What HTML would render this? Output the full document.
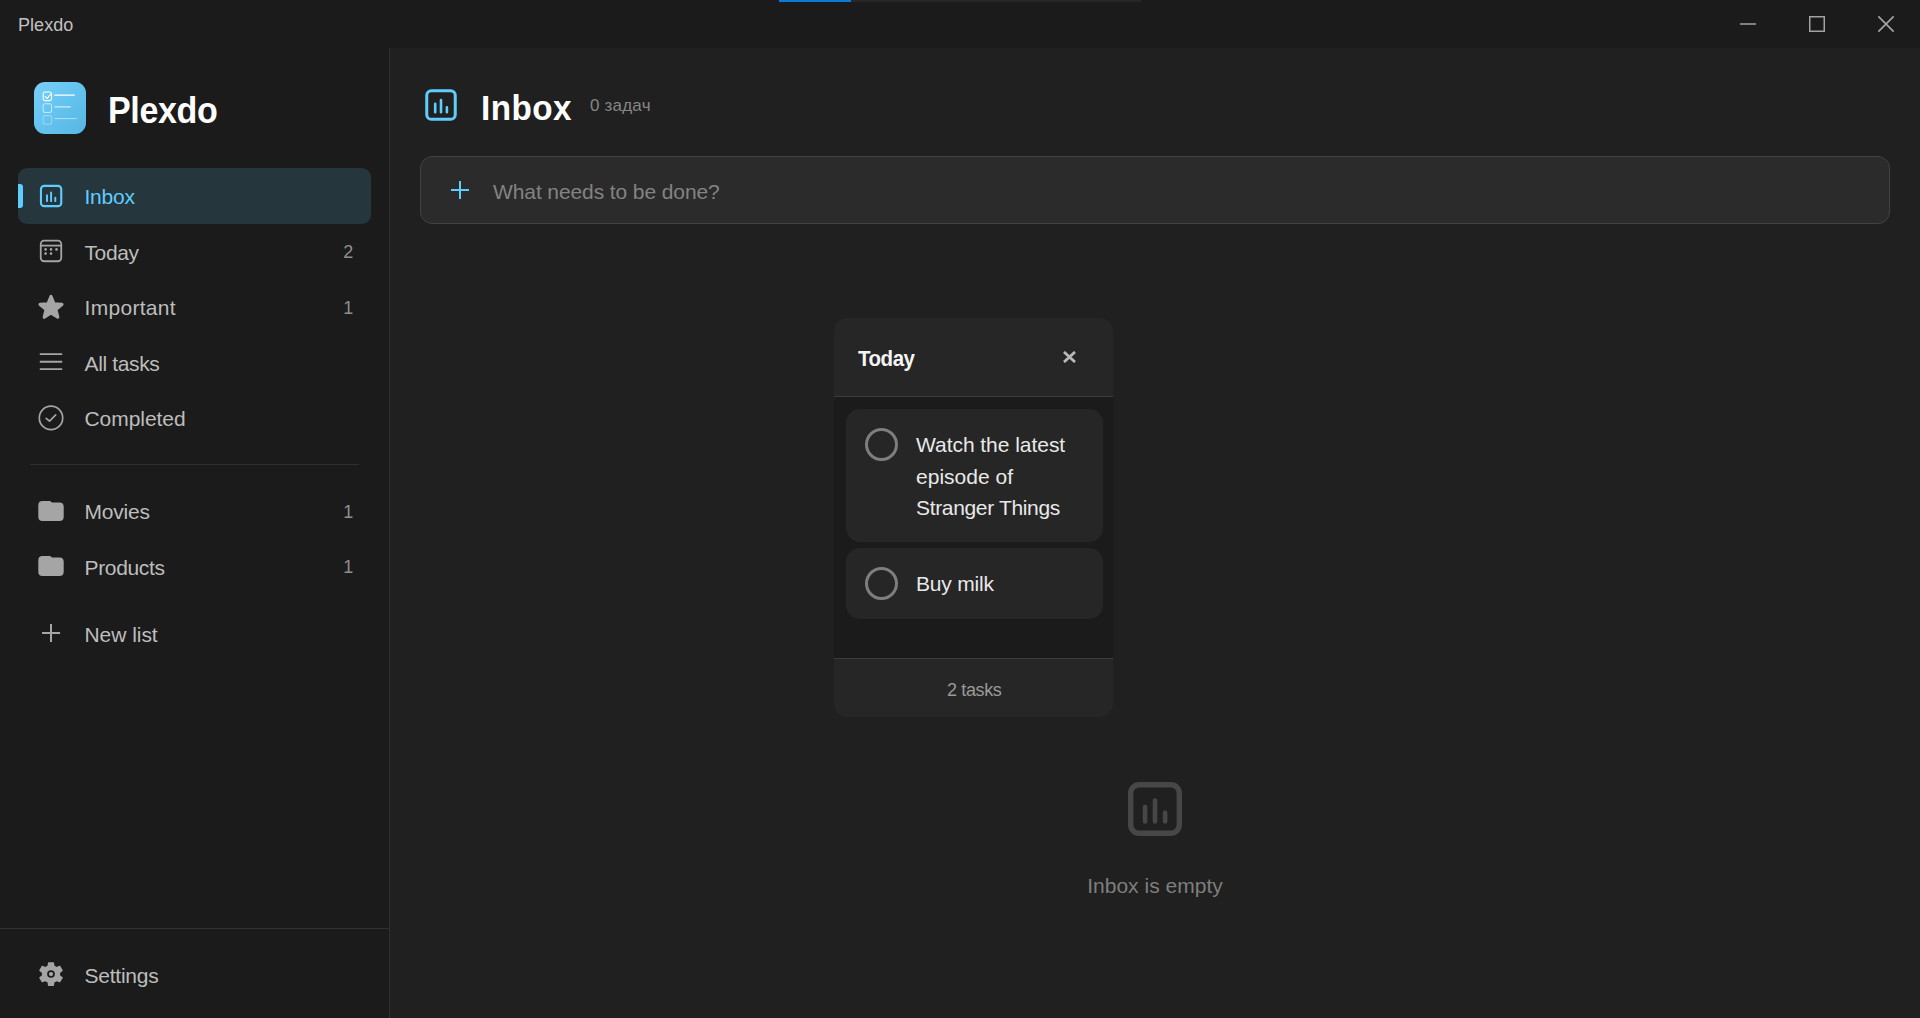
<!DOCTYPE html>
<html lang="en">
<head>
<meta charset="utf-8">
<title>Plexdo</title>
<style>
*{box-sizing:border-box;margin:0;padding:0}
html,body{width:1920px;height:1018px;overflow:hidden;background:#1b1b1b}
body{font-family:"Liberation Sans","DejaVu Sans",sans-serif;color:#c4c4c4;position:relative}
.abs{position:absolute}
svg{display:block}
#titlebar{left:0;top:0;width:1920px;height:48px;background:#1b1b1b}
#titlebar .t{left:18px;top:14px;font-size:18px;line-height:22px;color:#c2c2c2;letter-spacing:0.05px}
#prog{left:779px;top:0;width:362px;height:2px;background:#272727}
#prog i{display:block;width:72px;height:2px;background:#0a7ad6}
#sidebar{left:0;top:48px;width:390px;height:970px;background:#1b1b1b;border-right:1px solid #303030}
#logo{left:33.65px;top:81.65px;width:52.65px;height:52.65px;border-radius:11px;background:linear-gradient(135deg,#78d0fa 0%,#66c4f0 45%,#58b6e4 100%)}
#brand{left:108.1px;top:89px;font-size:36.2px;line-height:44px;font-weight:700;color:#fff;letter-spacing:-0.36px;transform:scaleX(.94);transform-origin:0 0;white-space:nowrap}
#active{left:18px;top:168px;width:353px;height:56px;border-radius:9px;background:#25363d}
#active i{position:absolute;left:0;top:16px;width:5px;height:24px;background:#60cdff;border-radius:0 3px 3px 0}
.lb{left:84.5px;font-size:21px;line-height:26px;color:#bdbdbd;white-space:nowrap}
.lb.on{color:#60cdff}
.ct{left:300px;width:53.3px;font-size:18px;line-height:22px;color:#8f8f8f;text-align:right}
#div1{left:30px;top:464px;width:329px;height:1px;background:#2f2f2f}
#div2{left:0;top:928px;width:389px;height:1px;background:#313131}
#main{left:390px;top:48px;width:1530px;height:970px;background:#202020}
#h-title{left:481px;top:86.3px;font-size:35.4px;line-height:44px;font-weight:700;color:#fff;letter-spacing:0.5px;transform:scaleX(.94);transform-origin:0 0;white-space:nowrap}
#h-sub{left:590px;top:95px;font-size:17px;line-height:22px;color:#868686;letter-spacing:0.2px}
#input{left:420px;top:156px;width:1470px;height:68px;border-radius:12px;background:#2b2b2b;border:1px solid #424242}
#ph{left:493px;top:179px;font-size:21px;line-height:26px;color:#838383;letter-spacing:-0.1px;white-space:nowrap}
#pop{left:834px;top:318px;width:279px;height:399px;border-radius:12.5px;background:#1b1b1b;overflow:hidden}
#pop .hd{left:0;top:0;width:279px;height:79px;background:#262626;border-bottom:1px solid #3d3d3d}
#pop .hd b{left:24px;top:26.5px;font-size:21.6px;line-height:28px;color:#f4f4f4;font-weight:700;letter-spacing:-0.5px;transform:scaleX(.95);transform-origin:0 0;white-space:nowrap}
#pop .ft{left:0;top:340px;width:279px;height:59px;background:#262626;border-top:1px solid #3d3d3d;text-align:center;font-size:18px;line-height:22px;padding-top:20px;padding-left:1.5px;color:#9a9a9a;letter-spacing:-0.36px}
.card{left:12px;width:257px;background:#262626;border-radius:14px}
.card .circ{left:19px;top:19px;width:33px;height:33px;border-radius:50%;border:3px solid #7e7e7e}
.card .tx{left:70px;top:20px;font-size:21px;line-height:31.7px;color:#e9e9e9;white-space:nowrap}
#empty-tx{left:955px;top:873px;width:400px;text-align:center;font-size:21px;line-height:26px;color:#7e7e7e;letter-spacing:0.02px}
</style>
</head>
<body>
<div id="titlebar" class="abs">
  <div class="t abs">Plexdo</div>
  <div id="prog" class="abs"><i></i></div>
  <svg class="abs" style="left:1740px;top:16px" width="16" height="16" viewBox="0 0 16 16"><path d="M0 8h16" stroke="#a2a2a2" stroke-width="1.5" fill="none"/></svg>
  <svg class="abs" style="left:1809px;top:16px" width="16" height="16" viewBox="0 0 16 16"><rect x=".75" y=".75" width="14.5" height="14.5" stroke="#a2a2a2" stroke-width="1.5" fill="none"/></svg>
  <svg class="abs" style="left:1878px;top:16px" width="16" height="16" viewBox="0 0 16 16"><path d="M.3.3l15.4 15.4M15.7.3L.3 15.7" stroke="#a2a2a2" stroke-width="1.7" fill="none"/></svg>
</div>
<div id="sidebar" class="abs"></div>
<div id="main" class="abs"></div>

<div id="logo" class="abs"></div>
<svg class="abs" style="left:34px;top:81px" width="53" height="54" viewBox="0.16 0 53 54" fill="none" stroke="#fff" stroke-linecap="round" stroke-linejoin="round">
    <rect x="9.3" y="11" width="8.4" height="8.6" rx="2" stroke-width="1.05"/>
    <path d="M11.3 15.6l2 2 3.6-4.4" stroke-width="1.15"/>
    <path d="M21 14.1h19.6" stroke-width="1.35"/>
    <rect x="9.3" y="22.8" width="8.4" height="8.6" rx="2" stroke-width="1.05" opacity=".6"/>
    <path d="M21 25.8h15.6" stroke-width="1.2" opacity=".7"/>
    <rect x="9.3" y="34.6" width="8.4" height="8.6" rx="2" stroke-width="1.05" opacity=".35"/>
    <path d="M21 37.6h21.6" stroke-width="1.0" opacity=".5"/>
  </svg>
<div id="brand" class="abs">Plexdo</div>

<div id="active" class="abs"><i></i></div>
<svg class="abs" style="left:0;top:0" width="390" height="1018" viewBox="0 0 390 1018"><rect x="40.95" y="185.85" width="20.30" height="20.30" rx="3.27" fill="none" stroke="#60cdff" stroke-width="2.1"/><path d="M46.98 195.17V201.17M51.10 192.47V201.17M55.30 197.59V201.17" fill="none" stroke="#60cdff" stroke-width="1.90" stroke-linecap="round"/>
<g fill="none" stroke="#a5a5a5" stroke-width="1.8"><rect x="40.75" y="240.55" width="20.5" height="20.7" rx="3.4"/><path d="M40.7 245.6H61.3"/></g><g fill="#a5a5a5"><circle cx="45.6" cy="249.4" r="1.3"/><circle cx="51" cy="249.4" r="1.3"/><circle cx="56.5" cy="249.4" r="1.3"/><circle cx="45.6" cy="253.6" r="1.3"/><circle cx="51" cy="253.6" r="1.3"/></g>
<polygon points="51.00,296.50 53.94,303.90 61.89,304.41 55.76,309.50 57.73,317.21 51.00,312.95 44.27,317.21 46.24,309.50 40.11,304.41 48.06,303.90" fill="#a5a5a5" stroke="#a5a5a5" stroke-width="3.3" stroke-linejoin="round"/>
<path d="M39.8 354.1H62.2M39.8 361.7H62.2M39.8 369.1H62.2" stroke="#a5a5a5" stroke-width="1.9" fill="none"/>
<g fill="none" stroke="#a5a5a5" stroke-width="1.7" stroke-linecap="round" stroke-linejoin="round"><circle cx="51" cy="417.9" r="11.7"/><path d="M46.2 418.4L49.5 421.2L55.7 414.9"/></g>
<path transform="translate(37 497.3)" d="M1.3 8Q1.3 3.7 5.6 3.7H12.6Q13.4 3.6 13.9 4.2L14.9 5.1H22.4Q26.7 5.1 26.7 9.4V19.4Q26.7 23.7 22.4 23.7H5.6Q1.3 23.7 1.3 19.4Z" fill="#a5a5a5"/>
<path transform="translate(37 552.3)" d="M1.3 8Q1.3 3.7 5.6 3.7H12.6Q13.4 3.6 13.9 4.2L14.9 5.1H22.4Q26.7 5.1 26.7 9.4V19.4Q26.7 23.7 22.4 23.7H5.6Q1.3 23.7 1.3 19.4Z" fill="#a5a5a5"/>
<path d="M51 624V641.9M42 633H60.1" stroke="#a5a5a5" stroke-width="2" fill="none"/>
<g transform="translate(35.84 959.25) scale(1.2632 1.2371)" fill="#a5a5a5" fill-rule="evenodd"><path d="M19.14,12.94c0.04-0.3,0.06-0.61,0.06-0.94c0-0.32-0.02-0.64-0.07-0.94l2.03-1.58c0.18-0.14,0.23-0.41,0.12-0.61 l-1.92-3.32c-0.12-0.22-0.37-0.29-0.59-0.22l-2.39,0.96c-0.5-0.38-1.03-0.7-1.62-0.94L14.4,2.81c-0.04-0.24-0.24-0.41-0.48-0.41 h-3.84c-0.24,0-0.43,0.17-0.47,0.41L9.25,5.35C8.66,5.59,8.12,5.92,7.63,6.29L5.24,5.33c-0.22-0.08-0.47,0-0.59,0.22L2.74,8.87 C2.62,9.08,2.66,9.34,2.86,9.48l2.03,1.58C4.84,11.36,4.8,11.69,4.8,12s0.02,0.64,0.07,0.94l-2.03,1.58 c-0.18,0.14-0.23,0.41-0.12,0.61l1.92,3.32c0.12,0.22,0.37,0.29,0.59,0.22l2.39-0.96c0.5,0.38,1.03,0.7,1.62,0.94l0.36,2.54 c0.05,0.24,0.24,0.41,0.48,0.41h3.84c0.24,0,0.44-0.17,0.47-0.41l0.36-2.54c0.59-0.24,1.13-0.56,1.62-0.94l2.39,0.96 c0.22,0.08,0.47,0,0.59-0.22l1.92-3.32c0.12-0.22,0.07-0.47-0.12-0.61L19.14,12.94z M12,15.05a3.05,3.05,0,1,0,0,-6.1a3.05,3.05,0,1,0,0,6.1z"/><circle cx="12" cy="12" r="1.7"/></g></svg>
<div class="lb abs on" style="top:184.0px;letter-spacing:-0.23px">Inbox</div>
<div class="lb abs" style="top:239.5px;letter-spacing:-0.4px">Today</div><div class="ct abs" style="top:241.0px">2</div>
<div class="lb abs" style="top:295.0px;letter-spacing:0.3px">Important</div><div class="ct abs" style="top:296.5px">1</div>
<div class="lb abs" style="top:350.5px;letter-spacing:-0.36px">All tasks</div>
<div class="lb abs" style="top:406.0px;letter-spacing:-0.06px">Completed</div>
<div class="lb abs" style="top:499.3px;letter-spacing:-0.21px">Movies</div><div class="ct abs" style="top:500.8px">1</div>
<div class="lb abs" style="top:554.8px;letter-spacing:-0.34px">Products</div><div class="ct abs" style="top:556.3px">1</div>
<div class="lb abs" style="top:622.2px;letter-spacing:-0.05px">New list</div>
<div class="lb abs" style="top:963.0px;letter-spacing:-0.24px">Settings</div>

<div id="div1" class="abs"></div>
<div id="div2" class="abs"></div>

<div id="input" class="abs"></div>
<svg class="abs" style="left:390px;top:48px" width="1530" height="970" viewBox="390 48 1530 970"><rect x="426.75" y="90.75" width="28.50" height="28.50" rx="4.60" fill="none" stroke="#60cdff" stroke-width="3"/><path d="M435.20 103.80V112.30M441.00 100.00V112.30M446.90 107.20V112.30" fill="none" stroke="#60cdff" stroke-width="2.60" stroke-linecap="round"/><rect x="1130.70" y="784.70" width="48.60" height="48.60" rx="8.50" fill="none" stroke="#474747" stroke-width="5.4"/><path d="M1145.06 807.01V821.44M1155.00 800.50V821.44M1165.11 812.84V821.44" fill="none" stroke="#474747" stroke-width="4.60" stroke-linecap="round"/><path d="M460 181V199M451 190H469" stroke="#60cdff" stroke-width="2" fill="none"/></svg>
<div id="h-title" class="abs">Inbox</div>
<div id="h-sub" class="abs">0 задач</div>
<div id="ph" class="abs">What needs to be done?</div>

<div id="pop" class="abs">
  <div class="hd abs"><b class="abs">Today</b>
    <svg class="abs" style="left:229px;top:32.8px" width="13" height="12" viewBox="0 0 13 12"><path d="M1 .9l11 10.2M12 .9L1 11.1" stroke="#b8b8b8" stroke-width="2.7" fill="none"/></svg>
  </div>
  <div class="card abs" style="top:91px;height:133px"><div class="circ abs"></div><div class="tx abs"><span style="letter-spacing:-.04px">Watch the latest</span><br><span style="letter-spacing:.02px">episode of</span><br><span style="letter-spacing:-.34px">Stranger Things</span></div></div>
  <div class="card abs" style="top:230px;height:71px"><div class="circ abs"></div><div class="tx abs" style="letter-spacing:-.19px">Buy milk</div></div>
  <div class="ft abs">2 tasks</div>
</div>

<div id="empty-tx" class="abs">Inbox is empty</div>
</body>
</html>
